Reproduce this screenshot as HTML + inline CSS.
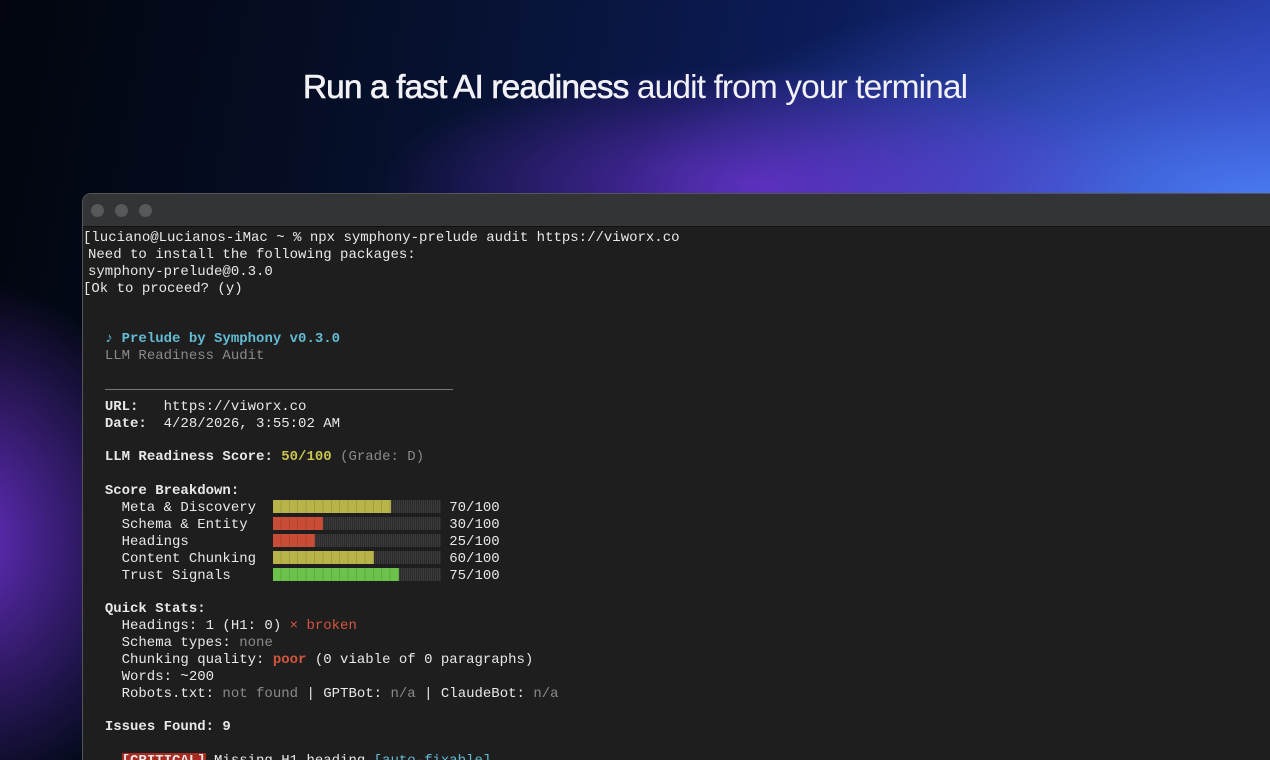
<!DOCTYPE html>
<html><head><meta charset="utf-8"><style>
html,body{margin:0;padding:0;width:1270px;height:760px;overflow:hidden}
body{position:relative;
background:
radial-gradient(ellipse 380px 120px at 760px 185px, rgba(120,50,220,0.7), rgba(120,50,220,0) 100%),
radial-gradient(ellipse 200px 260px at -30px 540px, rgba(110,50,210,0.9), rgba(110,50,210,0) 100%),
radial-gradient(ellipse 650px 230px at 1270px 200px, #4a7af2 0%, rgba(70,100,230,0.6) 45%, rgba(40,60,180,0) 100%),
linear-gradient(100deg,#02050d 0%,#06102c 30%,#0c1c5a 60%,#2a40b8 100%);
font-family:"Liberation Sans",sans-serif}
h1{position:absolute;top:69px;left:0;width:1270px;text-align:center;margin:0;color:#f2f2f6;font-size:33.5px;letter-spacing:-0.9px;font-weight:normal;line-height:38px}
h1 b{font-weight:normal;-webkit-text-stroke:0.6px #f2f2f6}
.term{position:absolute;left:82px;top:193px;width:1200px;height:567px;background:#1e1e1e;border-radius:9px 0 0 0;border:1px solid #555;border-right:none;border-bottom:none;overflow:hidden}
.bar{height:32px;background:#323436;border-bottom:1px solid #111;position:relative}
.dot{position:absolute;top:10px;width:13px;height:13px;border-radius:50%;background:#56585b}
pre{margin:0;padding:3px 0 0 5px;font-family:"Liberation Mono",monospace;font-size:14px;line-height:16.88px;color:#e8e8e8}
.c{color:#62bcd4;font-weight:bold}.g{color:#8a8a8a}.y{color:#c9c44e;font-weight:bold}.r{color:#d4553e}.rb{color:#d4553e;font-weight:bold}.t{color:#62bcd4}
b{font-weight:bold}
.b{display:inline-block;width:168px;height:13px;vertical-align:-2px;background:repeating-linear-gradient(90deg,#3a3a3a 0 1px,#2b2b2b 1px 2px)}
.b i{display:block;height:13px;background-image:repeating-linear-gradient(90deg,rgba(0,0,0,0) 0 7.4px,rgba(0,0,0,0.12) 7.4px 8.4px)}
.rule{display:inline-block;width:348px;border-top:1px solid #777;vertical-align:middle}
.crit{background:#a82b22;color:#e8e8e8;font-weight:bold}
</style></head><body>
<h1><b>Run a fast AI readiness</b> audit from your terminal</h1>
<div class="term">
<div class="bar"><span class="dot" style="left:8px"></span><span class="dot" style="left:32px"></span><span class="dot" style="left:56px"></span></div>
<pre><span style="margin-left:-5px">[</span>luciano@Lucianos-iMac ~ % npx symphony-prelude audit https://viworx.co
Need to install the following packages:
symphony-prelude@0.3.0
<span style="margin-left:-5px">[</span>Ok to proceed? (y)


  <span class="c">♪ Prelude by Symphony v0.3.0</span>
  <span class="g">LLM Readiness Audit</span>

  <span class="rule"></span>
  <b>URL:</b>   https://viworx.co
  <b>Date:</b>  4/28/2026, 3:55:02 AM

  <b>LLM Readiness Score:</b> <span class="y">50/100</span> <span class="g">(Grade: D)</span>

  <b>Score Breakdown:</b>
    Meta &amp; Discovery  <span class="b"><i style="width:118px;background-color:#b8b44a"></i></span> 70/100
    Schema &amp; Entity   <span class="b"><i style="width:50px;background-color:#c84c36"></i></span> 30/100
    Headings          <span class="b"><i style="width:42px;background-color:#c84c36"></i></span> 25/100
    Content Chunking  <span class="b"><i style="width:101px;background-color:#b8b44a"></i></span> 60/100
    Trust Signals     <span class="b"><i style="width:126px;background-color:#6cc24a"></i></span> 75/100

  <b>Quick Stats:</b>
    Headings: 1 (H1: 0) <span class="r">× broken</span>
    Schema types: <span class="g">none</span>
    Chunking quality: <span class="rb">poor</span> (0 viable of 0 paragraphs)
    Words: ~200
    Robots.txt: <span class="g">not found</span> | GPTBot: <span class="g">n/a</span> | ClaudeBot: <span class="g">n/a</span>

  <b>Issues Found: 9</b>

    <span class="crit">[CRITICAL]</span> Missing H1 heading <span class="t">[auto-fixable]</span>
</pre>
</div>
</body></html>
